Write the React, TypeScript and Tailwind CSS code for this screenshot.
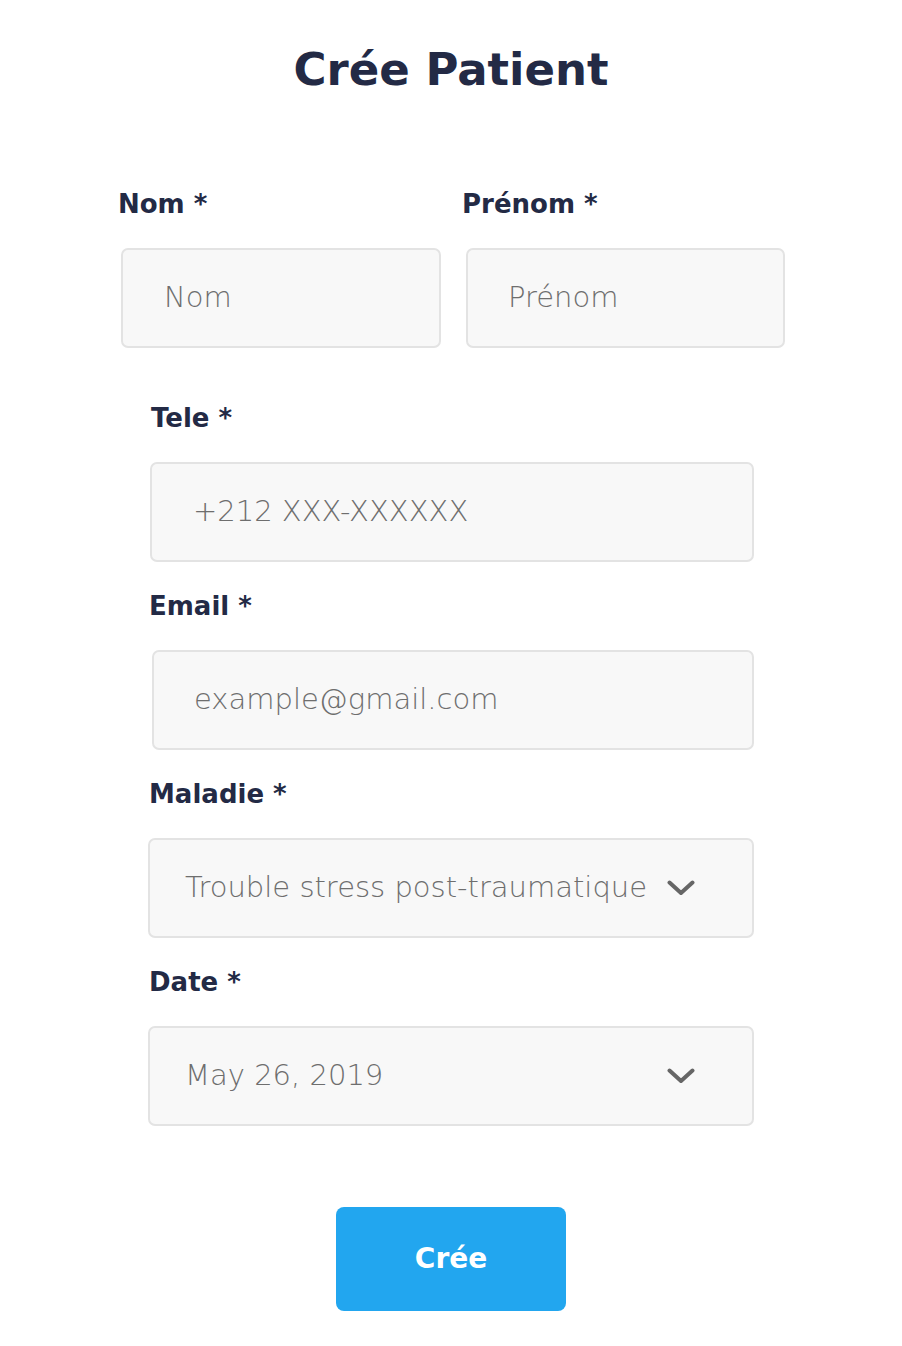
import React from 'react';

const ink = 'text-[#232a45]';

function Chevron() {
  return (
    <svg
      className="absolute right-[57px] top-1/2 -translate-y-1/2"
      width="28"
      height="16"
      viewBox="0 0 28 16"
      fill="none">
      <polyline points="2.5,2.5 14,13 25.5,2.5" stroke="#666666" strokeWidth="4" strokeLinecap="round" strokeLinejoin="round" />
    </svg>);

}

function Field({ label, children, className = '' }: {label: string;children: React.ReactNode;className?: string;}) {
  return (
    <div className={className}>
      <label className={`block h-[32px] leading-[32px] text-[26px] font-bold ${ink}`}>{label}</label>
      {children}
    </div>);

}

const boxCls =
'h-[100px] rounded-[7px] border-2 border-[#e3e3e3] bg-[#f8f8f8] text-[29px] font-light text-[#6e6e6e] flex items-center';

export default function App() {
  return (
    <div className="min-h-screen bg-white font-['DejaVu_Sans',sans-serif]">
      <h1 className={`pt-[42px] h-[98px] leading-[56px] text-center text-[45px] font-bold ${ink}`}>Crée Patient</h1>

      {/* nom / prénom */}
      <div className="mt-[90px] ml-[118px] grid grid-cols-[344px_322px]">
        <div>
          <label className={`block h-[32px] leading-[32px] text-[26px] font-bold ${ink}`}>Nom *</label>
          <div className={`${boxCls} mt-[28px] ml-[3px] w-[320px] pl-[41px]`}>Nom</div>
        </div>
        <div>
          <label className={`block h-[32px] leading-[32px] text-[26px] font-bold ${ink}`}>Prénom *</label>
          <div className={`${boxCls} mt-[28px] ml-[4px] w-[319px] pl-[40px]`}>Prénom</div>
        </div>
      </div>

      <Field label="Tele *" className="mt-[54px] ml-[151px]">
        <div className={`${boxCls} mt-[28px] -ml-[1px] w-[604px] pl-[41px]`}>+212 XXX-XXXXXX</div>
      </Field>

      <Field label="Email *" className="mt-[28px] ml-[149px]">
        <div className={`${boxCls} mt-[28px] ml-[3px] w-[602px] pl-[40px]`}>example@gmail.com</div>
      </Field>

      <Field label="Maladie *" className="mt-[28px] ml-[149px]">
        <div className={`${boxCls} relative mt-[28px] -ml-[1px] w-[606px] pl-[35px]`}>
          Trouble stress post-traumatique
          <Chevron />
        </div>
      </Field>

      <Field label="Date *" className="mt-[28px] ml-[149px]">
        <div className={`${boxCls} relative mt-[28px] -ml-[1px] w-[606px] pl-[35px]`}>
          May 26, 2019
          <Chevron />
        </div>
      </Field>

      <div className="mt-[81px] flex justify-center pb-[36px]">
        <button className="h-[104px] w-[230px] rounded-[8px] bg-[#22a6ef] text-[28px] font-bold text-white">Crée</button>
      </div>
    </div>);

}
